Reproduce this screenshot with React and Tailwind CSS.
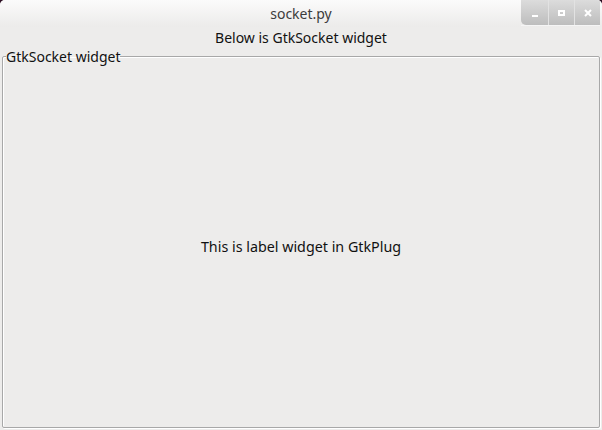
import React from 'react';

const font = { fontFamily: '"Noto Sans", "Open Sans", sans-serif' };

const WinButton = ({ children, first }) => (
  <div
    className={`h-[25px] flex items-center justify-center bg-gradient-to-b from-[#dcdcdc] to-[#bdbdbd] ${
      first ? 'w-[27px] rounded-bl-[5px]' : 'w-[26px] border-l border-[#e2e2e2]'
    }`}
  >
    {children}
  </div>
);

const App = () => {
  return (
    <div className="w-[602px] h-[430px] bg-[#2c0d22] overflow-hidden" style={font}>
      <div className="w-full h-full rounded-t-[5px] bg-[#edeceb] flex flex-col overflow-hidden">
        {/* Title bar */}
        <div className="relative h-[27px] shrink-0 bg-gradient-to-b from-[#fbfbfb] to-[#ecebea] flex items-center justify-center">
          <span className="text-[14px] text-[#3c3c3c] leading-none">socket.py</span>
          <div className="absolute top-0 right-[2px] flex shadow-[0_1px_0_#f5f5f5]">
            <WinButton first>
              <div className="w-[6px] h-[2px] mt-[6px] bg-white" />
            </WinButton>
            <WinButton>
              <div className="w-[7px] h-[6px] border-2 border-white" />
            </WinButton>
            <WinButton>
              <svg width="8" height="8" viewBox="0 0 8 8">
                <path d="M1 1 L7 7 M7 1 L1 7" stroke="white" strokeWidth="2" />
              </svg>
            </WinButton>
          </div>
        </div>

        {/* Top label */}
        <div className="h-[21px] shrink-0 flex items-center justify-center text-[14px] text-[#111]">
          Below is GtkSocket widget
        </div>

        {/* Socket frame */}
        <div className="flex-1 px-[2px] pb-[2px] flex flex-col">
          <fieldset className="flex-1 border border-[#a8a8a8] rounded-[2px] shadow-[inset_1px_1px_0_#fff,1px_1px_0_#fff] mt-[-1px] m-0 p-0 flex items-center justify-center">
            <legend className="ml-[3px] px-0 text-[14px] leading-[19px] text-[#111]">GtkSocket widget</legend>
            <span className="text-[14.3px] text-[#111]">This is label widget in GtkPlug</span>
          </fieldset>
        </div>
      </div>
    </div>
  );
};

export default App;
